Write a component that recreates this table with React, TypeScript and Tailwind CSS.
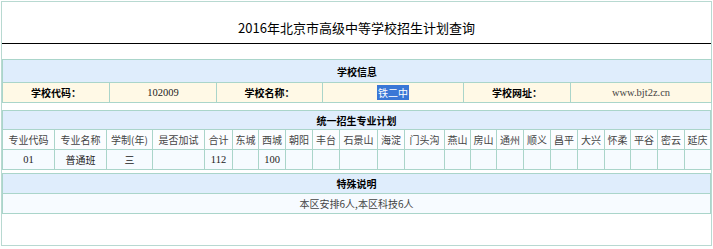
import React from 'react';

const cjk = '"Noto Sans CJK SC", "Noto Sans", sans-serif';
const serif = '"Liberation Serif", "Noto Sans CJK SC", serif';

const districts = ['东城', '西城', '朝阳', '丰台', '石景山', '海淀', '门头沟', '燕山', '房山', '通州', '顺义', '昌平', '大兴', '怀柔', '平谷', '密云', '延庆'];

const planCols = [
    'w-[52px]', 'w-[52px]', 'w-[46px]', 'w-[52px]', 'w-[28px]', 'w-[26px]', 'w-[27px]', 'w-[27px]', 'w-[27px]', 'w-[38px]', 'w-[27px]',
    'w-[40px]', 'w-[26px]', 'w-[26px]', 'w-[27px]', 'w-[27px]', 'w-[27px]', 'w-[27px]', 'w-[26px]', 'w-[27px]', 'w-[27px]', 'w-[26px]',
];

const cell = 'border border-[#aad5ca] p-0 text-center align-middle whitespace-nowrap';

const App: React.FC = () => {
    const planRow: string[] = ['01', '普通班', '三', '', '112', '', '100', ...Array(15).fill('')];

    return (
        <div className="bg-white w-[713px] h-[249px] pt-px pl-px text-[10px] text-[#222]" style={{ fontFamily: cjk }}>
            <div className="w-[711px] h-[245px] border border-[#b8d9d1] bg-white">
                <div className="h-[42px] border-b border-black pt-[18px] flex justify-center">
                    <h1 className="text-[13px] leading-[15px] font-normal text-black">2016年北京市高级中等学校招生计划查询</h1>
                </div>

                {/* 学校信息 */}
                <table className="mt-[15px] w-[709px] table-fixed border-collapse border border-[#aad5ca]">
                    <colgroup>
                        <col className="w-[107px]" />
                        <col className="w-[107px]" />
                        <col className="w-[106px]" />
                        <col className="w-[141px]" />
                        <col className="w-[107px]" />
                        <col className="w-[141px]" />
                    </colgroup>
                    <tbody>
                        <tr className="h-[23px] bg-[#dfedfc]">
                            <td colSpan={6} className={`${cell} font-bold text-black`}>学校信息</td>
                        </tr>
                        <tr className="h-[20px] bg-[#fff9e6]">
                            <td className={`${cell} font-bold text-black`}>学校代码：</td>
                            <td className={`${cell} text-[10.5px]`} style={{ fontFamily: serif }}>102009</td>
                            <td className={`${cell} font-bold text-black`}>学校名称：</td>
                            <td className={cell}>
                                <span className="bg-[#3a77d6] text-white px-px">铁二中</span>
                            </td>
                            <td className={`${cell} font-bold text-black`}>学校网址：</td>
                            <td className={`${cell} text-[10.5px] text-[#444]`} style={{ fontFamily: serif }}>www.bjt2z.cn</td>
                        </tr>
                    </tbody>
                </table>

                {/* 统一招生专业计划 */}
                <table className="mt-[7px] w-[709px] table-fixed border-collapse border border-[#aad5ca]">
                    <colgroup>
                        {planCols.map((w, i) => (
                            <col key={i} className={w} />
                        ))}
                    </colgroup>
                    <tbody>
                        <tr className="h-[19px] bg-[#dfedfc]">
                            <td colSpan={22} className={`${cell} font-bold text-black`}>统一招生专业计划</td>
                        </tr>
                        <tr className="h-[20px] bg-[#fbfdff] text-[#444]">
                            {['专业代码', '专业名称', '学制(年)', '是否加试', '合计', ...districts].map(h => (
                                <td key={h} className={cell}>{h}</td>
                            ))}
                        </tr>
                        <tr className="h-[20px] bg-[#f6fbff]">
                            {planRow.map((v, i) => (
                                <td key={i} className={`${cell} ${/\d/.test(v) ? 'text-[10.5px]' : ''}`} style={/\d/.test(v) ? { fontFamily: serif } : undefined}>
                                    {v}
                                </td>
                            ))}
                        </tr>
                    </tbody>
                </table>

                {/* 特殊说明 */}
                <table className="mt-[3px] w-[709px] border-collapse border border-[#aad5ca]">
                    <tbody>
                        <tr className="h-[20px] bg-[#dfedfc]">
                            <td className={`${cell} font-bold text-black`}>特殊说明</td>
                        </tr>
                        <tr className="h-[20px] bg-[#f7fbff]">
                            <td className={`${cell} text-[#444]`}>本区安排6人,本区科技6人</td>
                        </tr>
                    </tbody>
                </table>
            </div>
        </div>
    );
};

export default App;
